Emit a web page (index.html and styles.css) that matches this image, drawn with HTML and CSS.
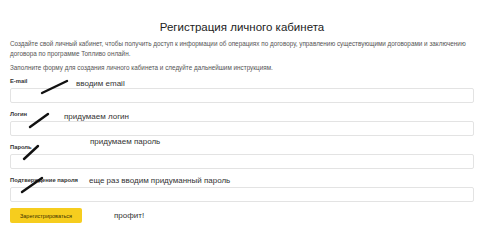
FILE: index.html
```html
<!DOCTYPE html>
<html lang="ru">
<head>
    <meta charset="UTF-8">
    <meta name="viewport" content="width=device-width, initial-scale=1.0">
    <title>Регистрация личного кабинета</title>
    <link rel="stylesheet" href="styles.css">
</head>
<body>
    <div class="page">
        <h1 class="title">Регистрация личного кабинета</h1>
        <p class="intro">Создайте свой личный кабинет, чтобы получить доступ к информации об операциях по договору, управлению существующими договорами и заключению договора по программе Топливо онлайн.</p>
        <p class="intro intro-last">Заполните форму для создания личного кабинета и следуйте дальнейшим инструкциям.</p>

        <div class="field field-first">
            <label class="label" for="email">E-mail</label>
            <span class="note note-email">вводим email</span>
            <input class="input" id="email" type="text">
        </div>
        <div class="field">
            <label class="label" for="login">Логин</label>
            <span class="note note-login">придумаем логин</span>
            <input class="input" id="login" type="text">
        </div>
        <div class="field">
            <label class="label" for="pass">Пароль</label>
            <span class="note note-pass">придумаем пароль</span>
            <input class="input" id="pass" type="password">
        </div>
        <div class="field">
            <label class="label" for="pass2">Подтверждение пароля</label>
            <span class="note note-confirm">еще раз вводим придуманный пароль</span>
            <input class="input" id="pass2" type="password">
        </div>

        <div class="actions">
            <button class="button">Зарегистрироваться</button>
            <span class="profit">профит!</span>
        </div>
    </div>

    <!-- marker strokes drawn over the form -->
    <svg class="marks" width="480" height="248" viewBox="0 0 480 248">
        <line x1="42" y1="93" x2="67" y2="81"/>
        <line x1="30" y1="127" x2="48" y2="114"/>
        <line x1="24" y1="159" x2="38" y2="146"/>
        <line x1="22" y1="192" x2="42" y2="178"/>
    </svg>
</body>
</html>
```

FILE: styles.css
```css
body {
    margin: 0;
    background-color: #fff;
    font-family: "Liberation Sans", Arial, sans-serif;
    color: #333;
}
.page {
    padding: 0 6px 0 10px;
}
.title {
    margin: 20px 0 0;
    font-size: 11.5px;
    line-height: 14px;
    font-weight: normal;
    text-align: center;
    color: #222;
}
.intro {
    margin: 5px 0 0;
    font-size: 6.35px;
    line-height: 10px;
    color: #555;
}
.intro-last {
    margin-top: 4px;
}
.field {
    position: relative;
    margin-top: 7px;
}
.field-first {
    margin-top: 4px;
}
.label {
    display: block;
    margin-bottom: 3px;
    font-size: 5.8px;
    line-height: 8px;
    font-weight: bold;
    color: #333;
}
.input {
    display: block;
    box-sizing: border-box;
    width: 100%;
    height: 15px;
    margin: 0;
    border: 1px solid #e3e3e3;
    border-radius: 2px;
    background: #fff;
}
.note {
    position: absolute;
    font-size: 8px;
    line-height: 10px;
    color: #333;
    white-space: nowrap;
}
.note-email {
    top: 2px;
    left: 66px;
}
.note-login {
    top: 2px;
    left: 54px;
}
.note-pass {
    top: -6px;
    left: 80px;
}
.note-confirm {
    top: 0;
    left: 79px;
}
.actions {
    display: flex;
    align-items: center;
    margin-top: 6px;
}
.button {
    width: 72px;
    height: 15px;
    padding: 0;
    font-family: inherit;
    font-size: 5.5px;
    color: #3a3000;
    background-color: #f6cd1e;
    border: none;
    border-radius: 2px;
}
.profit {
    margin-left: 32px;
    font-size: 8px;
    color: #333;
}
.marks {
    position: absolute;
    top: 0;
    left: 0;
    pointer-events: none;
}
.marks line {
    stroke: #111;
    stroke-width: 2.4;
    stroke-linecap: round;
}
```
